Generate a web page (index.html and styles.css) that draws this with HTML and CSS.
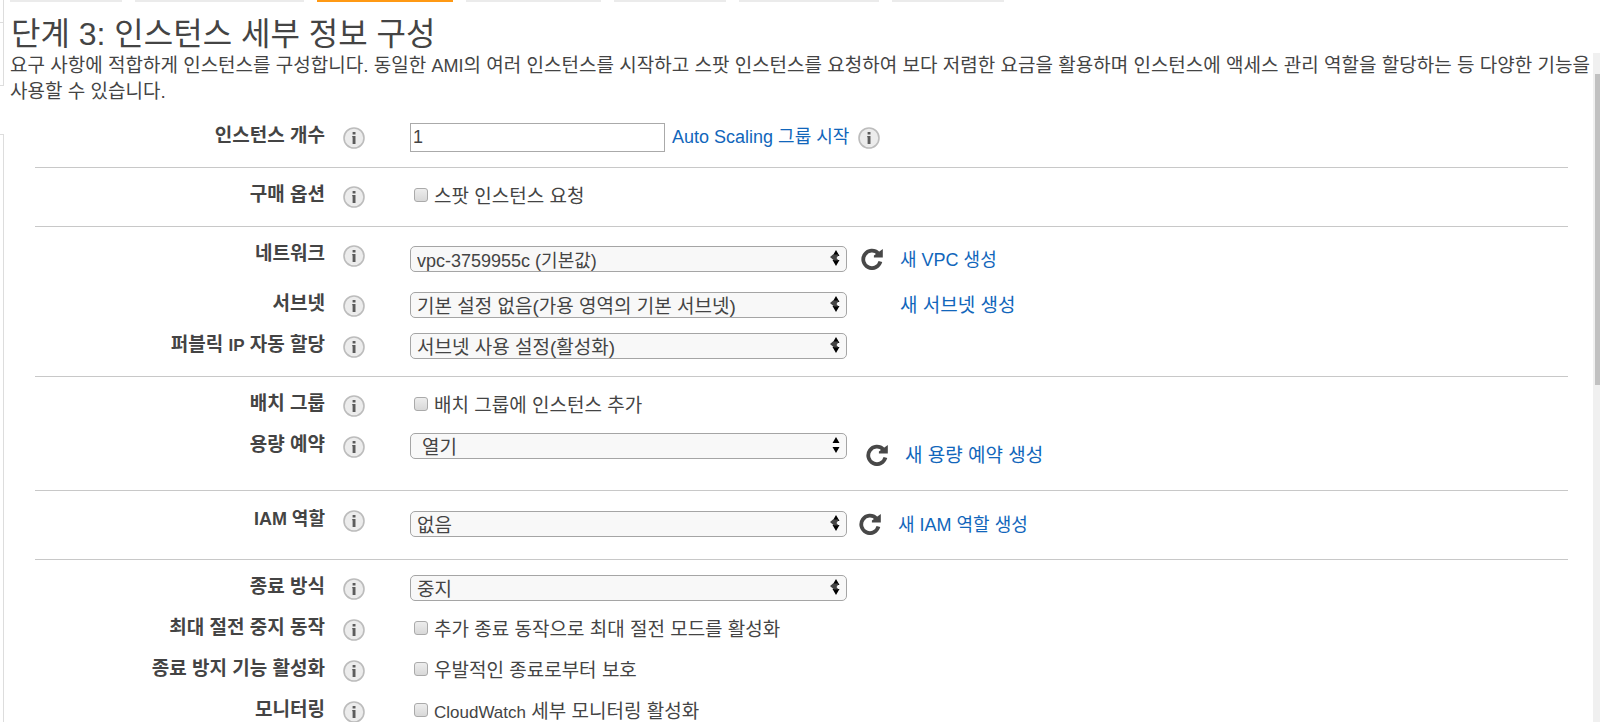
FILE: index.html
```html
<!DOCTYPE html>
<html lang="ko">
<head>
<meta charset="utf-8">
<title>단계 3: 인스턴스 세부 정보 구성</title>
<link rel="stylesheet" href="styles.css">
</head>
<body>
<svg class="sprite" aria-hidden="true">
  <symbol id="info" viewBox="0 0 22 22">
    <circle cx="11" cy="11" r="10" fill="#ececec" stroke="#bcbcbc" stroke-width="1.6"/>
    <path d="M9.6 5h2.9v2.4H9.6zM9.2 9h3.3v8H9.6v-6.800h-.4z" fill="#5c5c5c"/>
  </symbol>
  <symbol id="refresh" viewBox="0 0 22 22">
    <path d="M17.200 5.300A8.700 8.700 0 1 0 19.400 13.600" fill="none" stroke="#484848" stroke-width="3.800"/>
    <path d="M21.800 1v8.600h-8.900v-2.200z" fill="#484848"/>
  </symbol>
  <symbol id="arrows" viewBox="0 0 10 16">
    <path d="M6 0l3.500 6h-7zM6 16l3.500-6h-7z" fill="#000"/>
  </symbol>
  <symbol id="arrows-fold" viewBox="0 0 10 16">
    <path d="M6 0l3.500 6h-7zM6 16l3.500-6h-7z" fill="#000"/>
    <path d="M0 7l3-2.500h6L6.500 8l2 2.500H4z" fill="#444"/>
  </symbol>
</svg>

<div class="sidebar"><div class="side-box side-box-top"></div><div class="side-box side-box-main"></div></div>

<main class="wizard">
  <div class="steps">
    <span class="step step-1"></span><span class="step step-2"></span><span class="step step-3"></span><span class="step step-4"></span><span class="step step-5"></span><span class="step step-6"></span><span class="step step-7"></span>
  </div>
  <h1 class="title">단계 3: 인스턴스 세부 정보 구성</h1>
  <div class="scroller">
    <div class="content">
      <p class="intro">요구 사항에 적합하게 인스턴스를 구성합니다. 동일한 <span class="mixed">AMI</span>의 여러 인스턴스를 시작하고 스팟 인스턴스를 요청하여 보다 저렴한 요금을 활용하며 인스턴스에 액세스 관리 역할을 할당하는 등 다양한 기능을 사용할 수 있습니다.</p>
      <form class="form">
        <section class="group">
          <div class="row">
            <label class="name" for="count">인스턴스 개수</label>
            <svg class="icon"><use href="#info"/></svg>
            <div class="control">
              <input class="text" id="count" type="text" value="1">
              <a class="link mixed near" href="#">Auto Scaling 그룹 시작</a>
              <svg class="icon icon-after"><use href="#info"/></svg>
            </div>
          </div>
        </section>

        <section class="group">
          <div class="row">
            <span class="name">구매 옵션</span>
            <svg class="icon"><use href="#info"/></svg>
            <div class="control"><label class="check"><input class="box" type="checkbox">스팟 인스턴스 요청</label></div>
          </div>
        </section>

        <section class="group">
          <div class="row row-spaced">
            <label class="name" for="vpc">네트워크</label>
            <svg class="icon"><use href="#info"/></svg>
            <div class="control control-low">
              <span class="pick"><select class="select mixed" id="vpc"><option>vpc-3759955c (기본값)</option></select><svg class="arrows"><use href="#arrows-fold"/></svg></span>
              <button class="refresh" type="button" aria-label="새로 고침"><svg class="icon"><use href="#refresh"/></svg></button>
              <a class="link mixed" href="#">새 VPC 생성</a>
            </div>
          </div>
          <div class="row">
            <label class="name" for="subnet">서브넷</label>
            <svg class="icon"><use href="#info"/></svg>
            <div class="control">
              <span class="pick"><select class="select" id="subnet"><option>기본 설정 없음(가용 영역의 기본 서브넷)</option></select><svg class="arrows"><use href="#arrows-fold"/></svg></span>
              <a class="link link-alone" href="#">새 서브넷 생성</a>
            </div>
          </div>
          <div class="row">
            <label class="name" for="ip">퍼블릭 <span class="latin">IP</span> 자동 할당</label>
            <svg class="icon"><use href="#info"/></svg>
            <div class="control">
              <span class="pick"><select class="select" id="ip"><option>서브넷 사용 설정(활성화)</option></select><svg class="arrows"><use href="#arrows-fold"/></svg></span>
            </div>
          </div>
        </section>

        <section class="group group-capacity">
          <div class="row">
            <span class="name">배치 그룹</span>
            <svg class="icon"><use href="#info"/></svg>
            <div class="control"><label class="check"><input class="box" type="checkbox">배치 그룹에 인스턴스 추가</label></div>
          </div>
          <div class="row">
            <label class="name" for="capacity">용량 예약</label>
            <svg class="icon"><use href="#info"/></svg>
            <div class="control">
              <span class="pick"><select class="select select-indent" id="capacity"><option>열기</option></select><svg class="arrows"><use href="#arrows"/></svg></span>
              <span class="aside">
                <button class="refresh" type="button" aria-label="새로 고침"><svg class="icon"><use href="#refresh"/></svg></button>
                <a class="link" href="#">새 용량 예약 생성</a>
              </span>
            </div>
          </div>
        </section>

        <section class="group group-role">
          <div class="row">
            <label class="name mixed" for="role">IAM 역할</label>
            <svg class="icon"><use href="#info"/></svg>
            <div class="control control-low">
              <span class="pick"><select class="select" id="role"><option>없음</option></select><svg class="arrows"><use href="#arrows-fold"/></svg></span>
              <button class="refresh refresh-tight" type="button" aria-label="새로 고침"><svg class="icon"><use href="#refresh"/></svg></button>
              <a class="link mixed" href="#">새 IAM 역할 생성</a>
            </div>
          </div>
        </section>

        <section class="group group-last">
          <div class="row">
            <label class="name" for="shutdown">종료 방식</label>
            <svg class="icon"><use href="#info"/></svg>
            <div class="control">
              <span class="pick"><select class="select" id="shutdown"><option>중지</option></select><svg class="arrows"><use href="#arrows-fold"/></svg></span>
            </div>
          </div>
          <div class="row">
            <span class="name">최대 절전 중지 동작</span>
            <svg class="icon"><use href="#info"/></svg>
            <div class="control"><label class="check"><input class="box" type="checkbox">추가 종료 동작으로 최대 절전 모드를 활성화</label></div>
          </div>
          <div class="row">
            <span class="name">종료 방지 기능 활성화</span>
            <svg class="icon"><use href="#info"/></svg>
            <div class="control"><label class="check"><input class="box" type="checkbox">우발적인 종료로부터 보호</label></div>
          </div>
          <div class="row">
            <span class="name">모니터링</span>
            <svg class="icon"><use href="#info"/></svg>
            <div class="control"><label class="check"><input class="box" type="checkbox"><span><span class="latin">CloudWatch</span> 세부 모니터링 활성화</span></label></div>
          </div>
        </section>
      </form>
    </div>
    <div class="track"><div class="thumb"></div></div>
  </div>
</main>
</body>
</html>
```
FILE: styles.css
```css
* { box-sizing: border-box; }

body {
  margin: 0;
  height: 100vh;
  overflow: hidden;
  display: flex;
  background: #fff;
  color: #444;
  font-family: "Liberation Sans", "Noto Sans CJK KR", sans-serif;
  font-size: 19px;
  line-height: 26px;
}

.sprite { display: none; }
.mixed { font-size: 18px; }
.latin { font-size: 17px; }

/* Edge of the neighbouring panels */
.sidebar {
  flex: none;
  width: 4px;
  display: flex;
  flex-direction: column;
  gap: 48px;
}
.side-box { border-right: 1px solid #ddd; }
.side-box-top {
  height: 86px;
  border-bottom: 1px solid #ddd;
  background: linear-gradient(#ddd, #ddd) 0 22px / 100% 1px no-repeat;
}
.side-box-main { flex: 1; border-top: 1px solid #ddd; }

.wizard {
  flex: 1;
  min-width: 0;
  display: flex;
  flex-direction: column;
}

.steps { display: flex; gap: 13px; padding-left: 6px; }
.step { width: 112px; height: 2px; background: #ebebeb; }
.step-2 { width: 169px; }
.step-3 { width: 136px; background: #ff9914; }
.step-4 { width: 135px; }
.step-6 { width: 140px; }

.title {
  margin: 0;
  padding: 14px 0 0 7px;
  font-size: 32px;
  line-height: 37px;
  font-weight: 400;
}

.scroller { flex: 1; min-height: 0; display: flex; }
.content { flex: 1; min-width: 0; overflow: hidden; }
.intro { margin: 0; padding-left: 6px; }

.track { flex: none; width: 7px; padding: 21px 0 0 2px; background: #f0f0f0; }
.thumb { height: 48%; background: #c1c1c1; }

.form { padding: 4px 25px 0 31px; }
.group {
  display: grid;
  gap: 1px;
  padding: 9px 0;
  border-bottom: 1px solid #c8c8c8;
}
.group-capacity { padding-bottom: 23px; }
.group-role { padding: 10px 0 18px; }
.group-last { border-bottom: 0; }

.row {
  display: grid;
  grid-template-columns: 290px 22px 1fr;
  column-gap: 18px;
  align-items: center;
  height: 40px;
}
.row-spaced { margin-bottom: 9px; }

.name { text-align: right; font-weight: 700; padding-bottom: 4px; }
.icon { display: block; width: 22px; height: 22px; flex: none; }
.control { display: flex; align-items: center; margin-left: 27px; padding-bottom: 2px; }
.control-low { padding: 5px 0 0; }
.near { margin-left: 7px; }
.icon-after { margin: 2px 0 0 9px; }

.text {
  width: 255px;
  height: 29px;
  padding: 0 2px;
  border: 1px solid #aaa;
  color: #444;
  font: 18px "Liberation Sans", "Noto Sans CJK KR", sans-serif;
}

.pick { position: relative; flex: none; width: 437px; height: 26px; }
.select {
  appearance: none;
  display: block;
  width: 100%;
  height: 26px;
  padding: 2px 24px 0 6px;
  border: 1px solid #a5a5a5;
  border-radius: 5px;
  background: #f8f8f8;
  color: #444;
  font-family: inherit;
  line-height: 24px;
}
.select:not(.mixed) { font-size: 19px; }
.select-indent { padding-left: 11px; }
.arrows {
  position: absolute;
  right: 7px;
  top: 4px;
  width: 10px;
  height: 16px;
  pointer-events: none;
}

.refresh { margin: 0 17px 0 14px; padding: 0; border: 0; background: none; }
.refresh-tight { margin-left: 12px; }
.aside { display: flex; align-items: center; margin: 18px 0 0 5px; height: 0; }
.link { padding-top: 2px; color: #1166bb; text-decoration: none; white-space: nowrap; }
.link.near { padding-top: 0; }
.link-alone { margin-left: 53px; }

.check { display: flex; align-items: center; gap: 6px; padding: 2px 0 0 4px; }
.box {
  appearance: none;
  flex: none;
  width: 14px;
  height: 14px;
  margin: 0 0 4px;
  border: 1px solid #aaa;
  border-radius: 3px;
  background: linear-gradient(#ededed, #d8d8d8);
}
```
